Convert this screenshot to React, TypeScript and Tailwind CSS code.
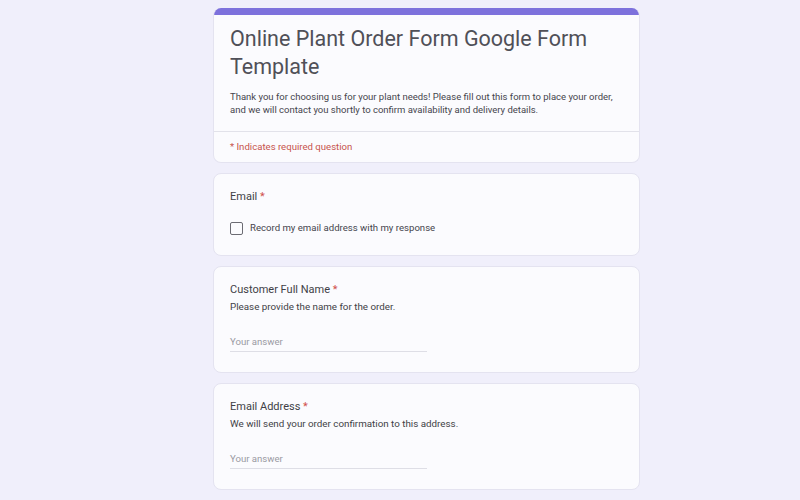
const Req = () => <span className="text-[#d0504a]"> *</span>;

const Card = ({ children, className = "" }: { children: React.ReactNode; className?: string }) => (
  <div className={`shrink-0 bg-[#fbfbfe] border border-[#e4e3f0] rounded-[8px] ${className}`}>{children}</div>
);

const TextQuestion = ({ label, help }: { label: string; help: string }) => (
  <Card className="px-4 pt-[15px] pb-[20px]">
    <div className="text-[11px] leading-[16px] text-[#3f3f46]">
      {label}
      <Req />
    </div>
    <div className="text-[9.8px] leading-[14px] text-[#3f3f46] mt-[2px]">{help}</div>
    <div className="mt-[21px] w-[197px] border-b border-[#dedee6] pb-[2px] text-[9.6px] leading-[14px] text-[#9a9aa3]">
      Your answer
    </div>
  </Card>
);

export default function App() {
  return (
    <div
      className="w-[800px] h-[500px] overflow-hidden bg-[#f0effb] flex pl-[213px] pt-[8px]"
      style={{ fontFamily: "Roboto, 'Liberation Sans', sans-serif" }}
    >
      <div className="w-[427px] flex flex-col gap-[10px]">
        <div className="shrink-0 rounded-[8px] overflow-hidden bg-[#fbfbfe] border border-[#e4e3f0] border-t-0">
          <div className="h-[7px] bg-[#7d71dc]" />
          <div className="pl-4 pr-[10px] pt-[10px] pb-[15px]">
            <h1 className="text-[21.5px] leading-[28px] text-[#505058]">
              Online Plant Order Form Google Form Template
            </h1>
            <p className="mt-[9px] text-[9.5px] leading-[13px] text-[#45454d]">
              Thank you for choosing us for your plant needs! Please fill out this form to place your order, and we will contact you shortly to confirm availability and delivery details.
            </p>
          </div>
          <div className="border-t border-[#e2e2ea] px-4 pt-[8px] pb-[9px] text-[9.6px] leading-[13px] text-[#c7544d]">
            * Indicates required question
          </div>
        </div>

        <Card className="px-4 pt-[15px] pb-[20px]">
          <div className="text-[11px] leading-[16px] text-[#3f3f46]">
            Email
            <Req />
          </div>
          <div className="mt-[16px] flex items-center gap-[7px]">
            <div className="w-[13px] h-[13px] border-[1.5px] border-[#6b6b73] rounded-[2px]" />
            <span className="text-[9.6px] leading-[14px] text-[#45454d]">Record my email address with my response</span>
          </div>
        </Card>

        <TextQuestion label="Customer Full Name" help="Please provide the name for the order." />
        <TextQuestion label="Email Address" help="We will send your order confirmation to this address." />
        <Card className="h-[60px]">
          <div />
        </Card>
      </div>
    </div>
  );
}
